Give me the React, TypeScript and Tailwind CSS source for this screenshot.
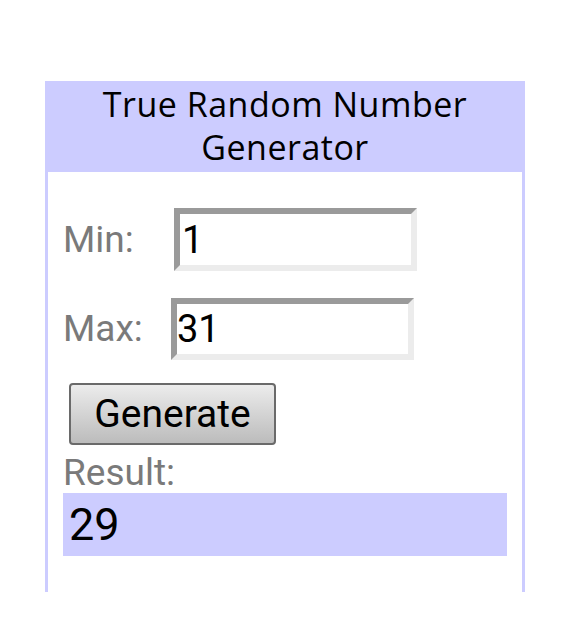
import { useState } from "react";

export default function App() {
  const [min, setMin] = useState("1");
  const [max, setMax] = useState("31");
  const [result, setResult] = useState("29");

  const generate = () => {
    const lo = parseInt(min, 10);
    const hi = parseInt(max, 10);
    if (isNaN(lo) || isNaN(hi) || hi < lo) return;
    setResult(String(lo + Math.floor(Math.random() * (hi - lo + 1))));
  };

  return (
    <div className="w-[581px] h-[619px] bg-white overflow-hidden font-['Roboto',sans-serif]">
      <div className="ml-[45px] pt-[81px] w-[480px]">
        {/* header */}
        <div className="bg-[#ccccff] pt-[2px] pb-[3px] text-center text-black text-[34px] leading-[43px] tracking-[0.5px] font-['Open_Sans',sans-serif]">
          True Random Number
          <br />
          Generator
        </div>

        {/* body */}
        <div className="h-[420px] overflow-hidden border-x-[3px] border-[#ccccff] px-[15px]">
          <div className="mt-[36px] flex items-center h-[63px]">
            <span className="w-[111px] text-[37px] text-[#7a7a7a]">Min:</span>
            <input
              value={min}
              onChange={(e) => setMin(e.target.value)}
              className="w-[243px] h-[63px] border-[6px] border-t-[#9a9a9a] border-l-[#9a9a9a] border-b-[#ececec] border-r-[#ececec] pl-[2px] text-[38px] text-black outline-none bg-white"
            />
          </div>
          <div className="mt-[27px] flex items-center h-[62px]">
            <span className="w-[108px] text-[37px] text-[#7a7a7a]">Max:</span>
            <input
              value={max}
              onChange={(e) => setMax(e.target.value)}
              className="w-[243px] h-[62px] border-[6px] border-t-[#9a9a9a] border-l-[#9a9a9a] border-b-[#ececec] border-r-[#ececec] pl-0 text-[38px] text-black outline-none bg-white"
            />
          </div>
          <button
            type="button"
            onClick={generate}
            className="mt-[23px] ml-[6px] w-[207px] h-[62px] rounded-[4px] border-2 border-[#6a6a6a] bg-gradient-to-b from-[#ececec] to-[#bcbcbc] text-[39px] text-black leading-none"
          >
            Generate
          </button>
          <div className="mt-[8px] text-[37px] leading-[40px] text-[#7a7a7a]">Result:</div>
          <div className="h-[63px] bg-[#ccccff] pl-[6px] flex items-center text-[45px] text-black">{result}</div>
        </div>
      </div>
    </div>
  );
}
